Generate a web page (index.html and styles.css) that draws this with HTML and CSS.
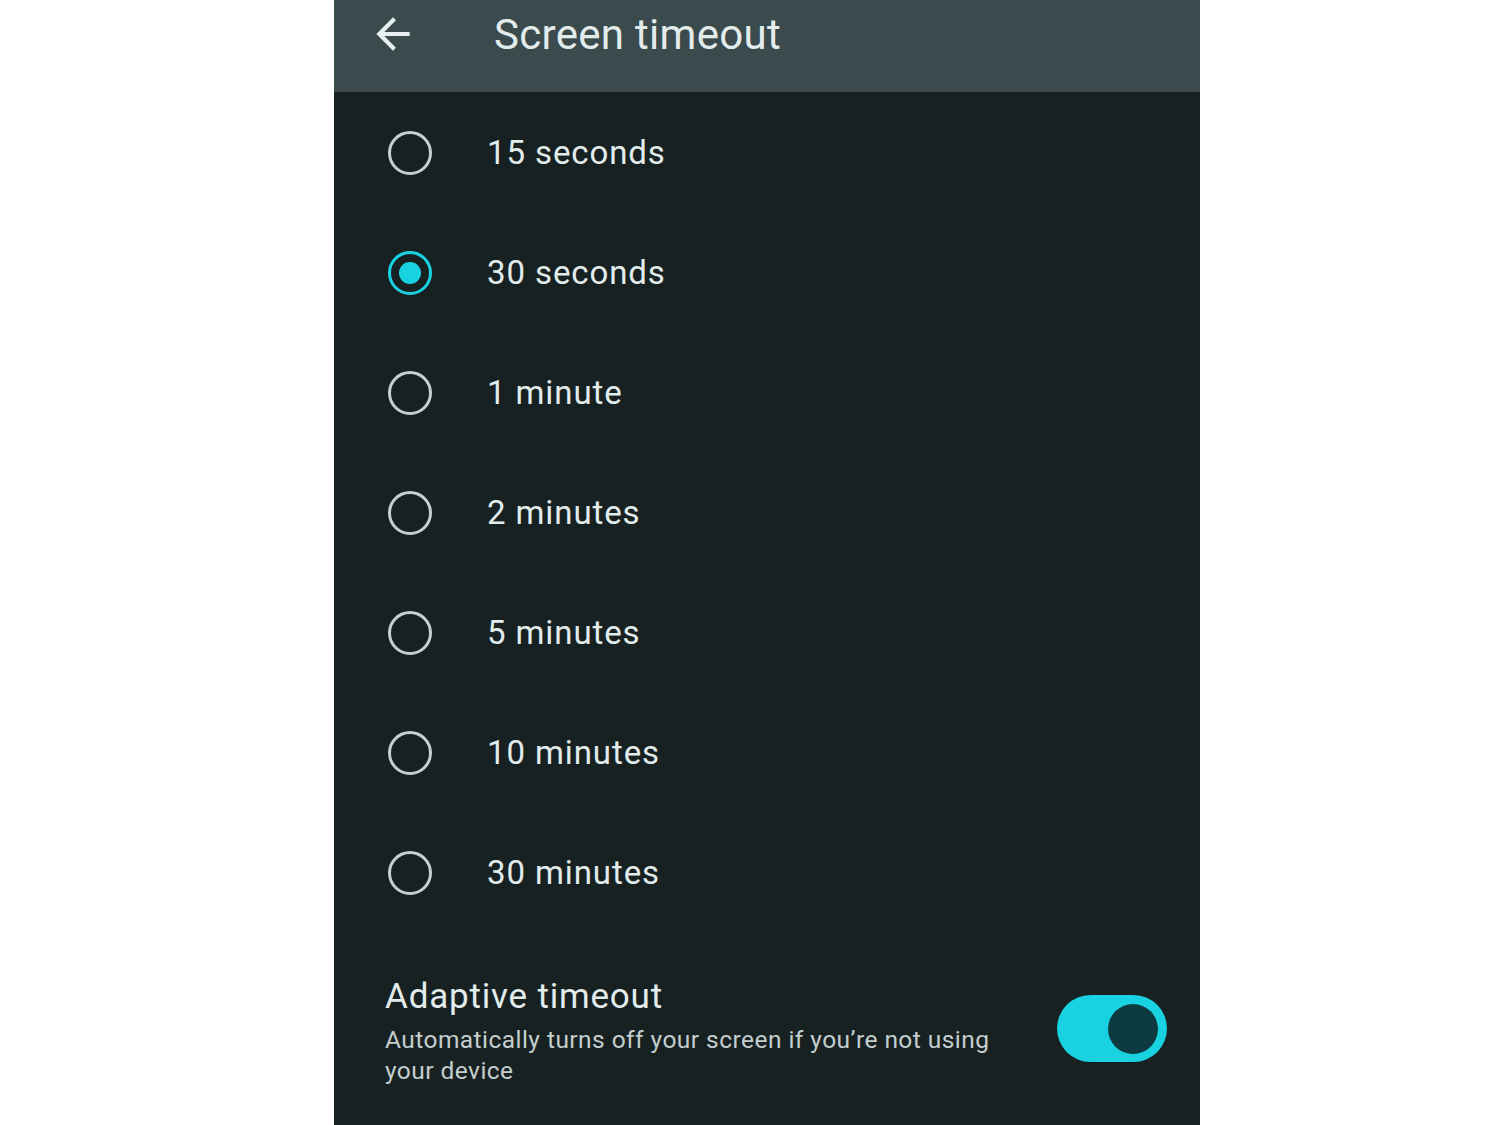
FILE: index.html
```html
<!DOCTYPE html>
<html lang="en">
<head>
    <meta charset="UTF-8">
    <meta name="viewport" content="width=device-width, initial-scale=1.0">
    <title>Screen timeout</title>
    <link rel="stylesheet" href="styles.css">
</head>
<body>

    <div class="phone">
        <!-- Top bar -->
        <div class="top-bar">
            <svg class="back-icon" viewBox="0 0 24 24" width="50" height="50">
                <path d="M20 11H7.83l5.59-5.59L12 4l-8 8 8 8 1.41-1.41L7.83 13H20v-2z" fill="#e6eeee"/>
            </svg>
            <h1>Screen timeout</h1>
        </div>

        <!-- Timeout options -->
        <div class="options">
            <div class="option"><span class="radio"></span><span class="label">15 seconds</span></div>
            <div class="option selected"><span class="radio"></span><span class="label">30 seconds</span></div>
            <div class="option"><span class="radio"></span><span class="label">1 minute</span></div>
            <div class="option"><span class="radio"></span><span class="label">2 minutes</span></div>
            <div class="option"><span class="radio"></span><span class="label">5 minutes</span></div>
            <div class="option"><span class="radio"></span><span class="label">10 minutes</span></div>
            <div class="option"><span class="radio"></span><span class="label">30 minutes</span></div>
        </div>

        <!-- Adaptive timeout -->
        <div class="adaptive">
            <div class="adaptive-text">
                <div class="adaptive-title">Adaptive timeout</div>
                <div class="adaptive-desc">Automatically turns off your screen if you’re not using your device</div>
            </div>
            <div class="switch"><span class="thumb"></span></div>
        </div>
    </div>

</body>
</html>
```

FILE: styles.css
```css
body {
    margin: 0;
    background-color: #fff;
    font-family: Roboto, "Noto Sans", sans-serif;
}
.phone {
    width: 866px;
    height: 1125px;
    margin-left: 334px;
    background-color: #172122;
    overflow: hidden;
}
.top-bar {
    height: 92px;
    background-color: #3b4a4c;
    display: flex;
    align-items: flex-start;
    padding-left: 34px;
    box-sizing: border-box;
}
.back-icon {
    margin-top: 9px;
}
.top-bar h1 {
    margin: 10px 0 0 76px;
    font-size: 42px;
    font-weight: 400;
    letter-spacing: 0.3px;
    color: #e2ecec;
}
.options {
    padding-top: 1px;
}
.option {
    height: 120px;
    display: flex;
    align-items: center;
    padding-left: 54px;
}
.radio {
    width: 38px;
    height: 38px;
    border: 3px solid #c6d0d0;
    border-radius: 50%;
    display: flex;
    align-items: center;
    justify-content: center;
}
.option.selected .radio {
    border-color: #18d2e2;
}
.option.selected .radio::after {
    content: "";
    width: 22px;
    height: 22px;
    border-radius: 50%;
    background-color: #18d2e2;
}
.label {
    margin-left: 55px;
    font-size: 33px;
    letter-spacing: 0.9px;
    color: #e2ecec;
    line-height: 44px;
}
.adaptive {
    display: flex;
    align-items: center;
    padding: 0 33px 0 51px;
    margin-top: 42px;
}
.adaptive-text {
    flex: 1;
    max-width: 640px;
}
.adaptive-title {
    font-size: 35px;
    letter-spacing: 0.8px;
    color: #e2ecec;
    line-height: 44px;
}
.adaptive-desc {
    font-size: 24.5px;
    letter-spacing: 0.45px;
    color: #c4cece;
    line-height: 31px;
    margin-top: 5px;
}
.switch {
    width: 110px;
    height: 67px;
    border-radius: 34px;
    background-color: #18d2e2;
    display: flex;
    align-items: center;
    justify-content: flex-end;
    padding-right: 9px;
    box-sizing: border-box;
    margin-left: auto;
    margin-top: -4px;
}
.thumb {
    width: 50px;
    height: 50px;
    border-radius: 50%;
    background-color: #0c3a40;
}
```
